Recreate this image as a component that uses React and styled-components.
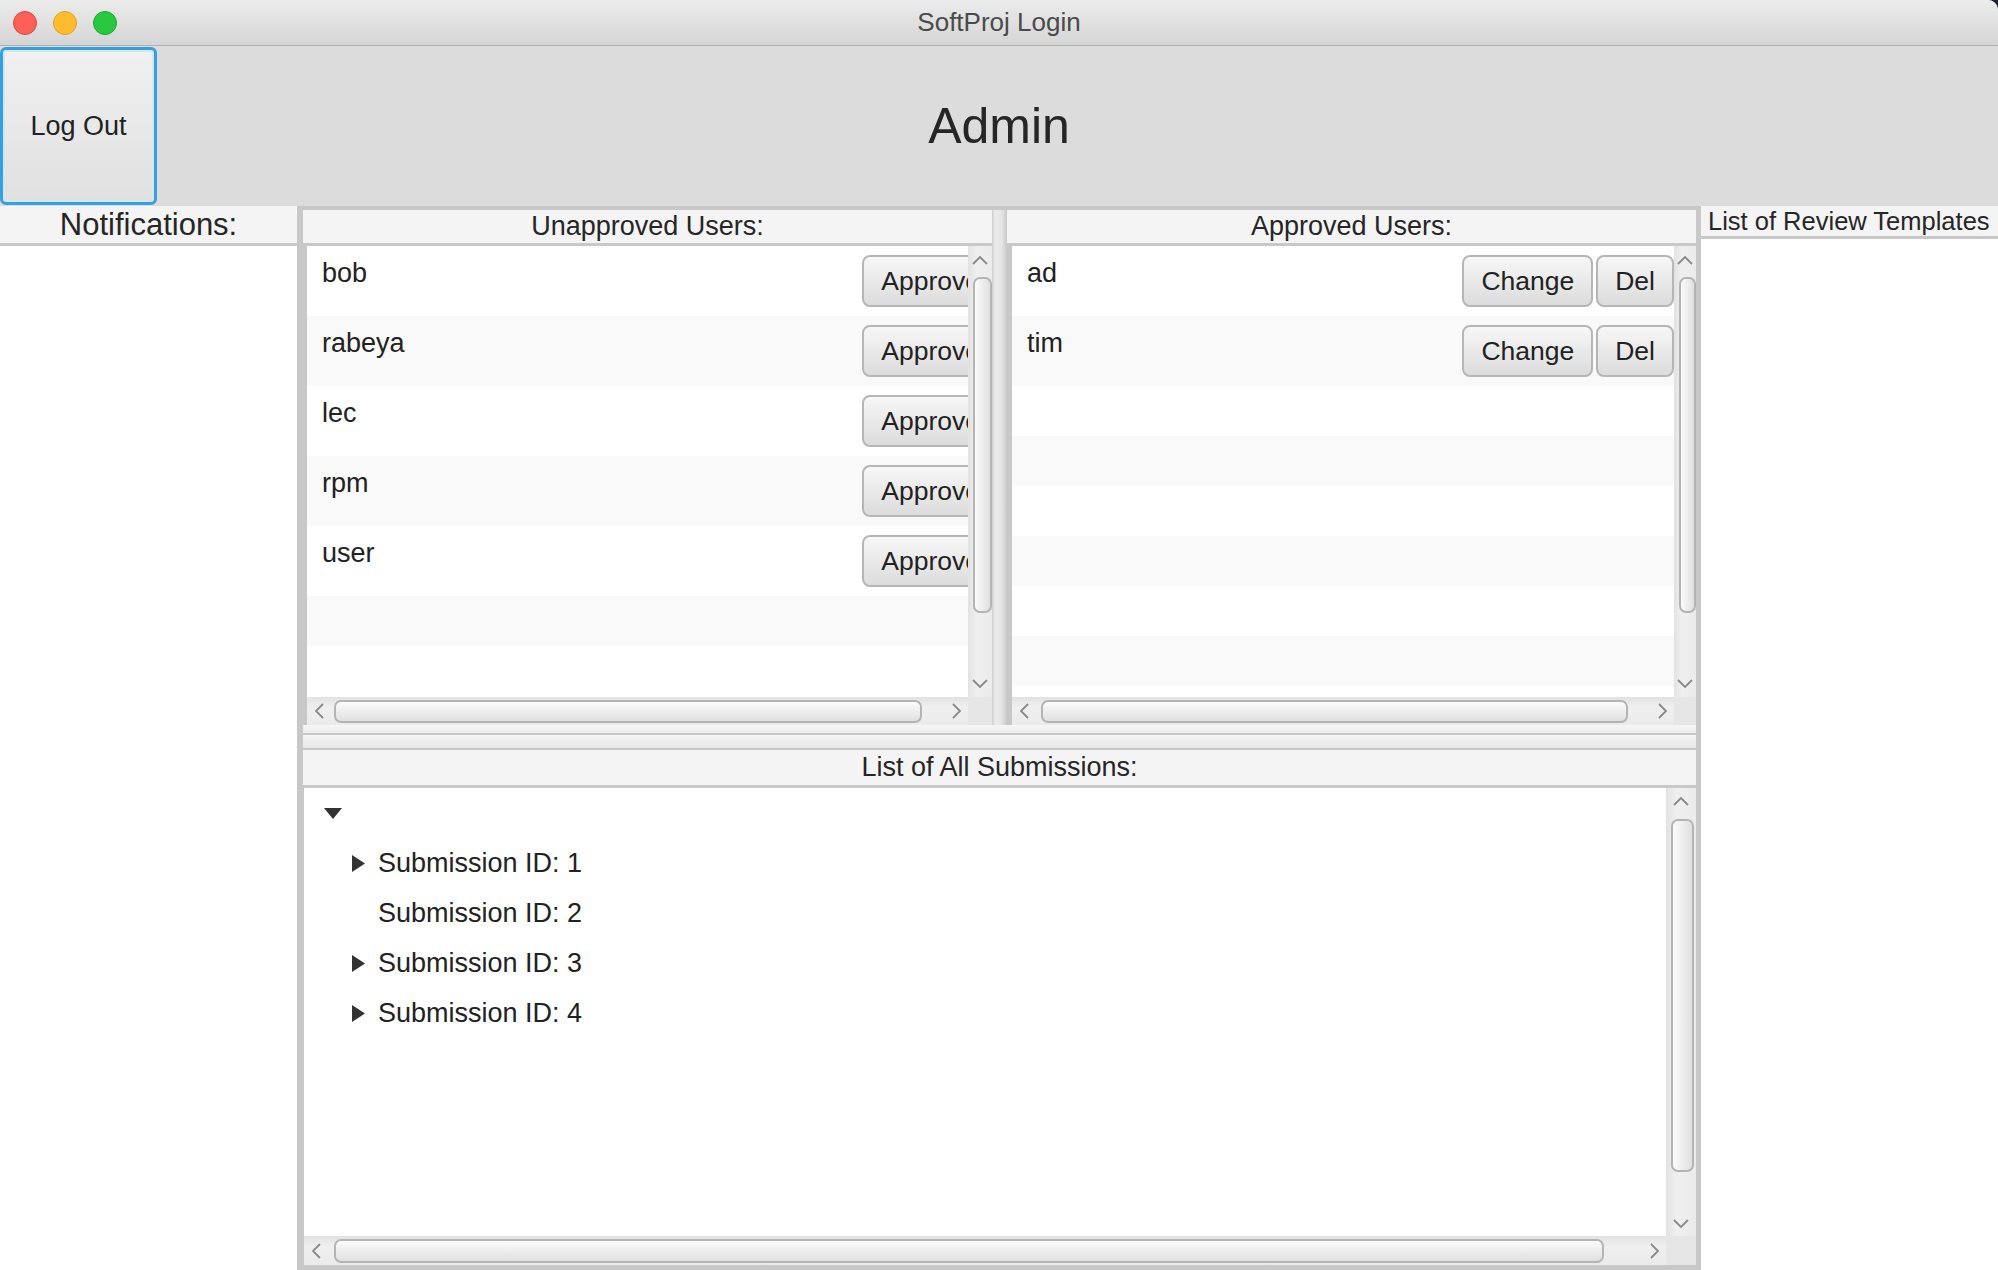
import React from "react";
import styled, { createGlobalStyle } from "styled-components";

const GlobalStyle = createGlobalStyle`
  html, body {
    margin: 0;
    padding: 0;
    background: #1c2330;
  }
  body {
    font-family: "Liberation Sans", Arial, sans-serif;
    color: #2a2a2a;
  }
  * {
    box-sizing: border-box;
  }
`;

const Window = styled.div`
  width: 1998px;
  height: 1270px;
  display: flex;
  flex-direction: column;
  overflow: hidden;
  background: #dcdcdc;
  border-top-right-radius: 10px;
`;

const TitleBar = styled.div`
  height: 46px;
  flex: none;
  display: grid;
  grid-template-columns: 200px 1fr 200px;
  align-items: center;
  background: linear-gradient(#ececec, #d5d5d5);
  border-bottom: 1px solid #b1b1b1;
`;

const Lights = styled.div`
  display: flex;
  gap: 16px;
  padding-left: 13px;
`;

const Light = styled.span`
  width: 24px;
  height: 24px;
  border-radius: 50%;
  background: ${(p) => p.$color};
  border: 1px solid ${(p) => p.$edge};
`;

const WindowTitle = styled.div`
  text-align: center;
  font-size: 26px;
  color: #4a4a4a;
`;

const Header = styled.div`
  height: 160px;
  flex: none;
  display: grid;
  grid-template-columns: 157px 1fr 157px;
  align-items: center;
`;

const LogOutButton = styled.button`
  width: 157px;
  height: 158px;
  padding: 0;
  border: 3px solid #35a0dd;
  border-radius: 6px;
  background: linear-gradient(#f1f1f1, #e0e0e0);
  box-shadow: inset 0 0 0 2px #d3e8f5;
  font-family: "Liberation Sans", Arial, sans-serif;
  font-size: 27px;
  color: #222;
`;

const AdminTitle = styled.h1`
  margin: 0;
  text-align: center;
  font-size: 50px;
  font-weight: normal;
  color: #262626;
`;

const Body = styled.div`
  flex: 1;
  min-height: 0;
  display: flex;
`;

const SideColumn = styled.div`
  width: 297px;
  flex: none;
  display: flex;
  flex-direction: column;
  background: #fff;
`;

const SideHeader = styled.div`
  height: ${(p) => (p.$left ? 33 : 40)}px;
  flex: none;
  display: flex;
  align-items: center;
  justify-content: ${(p) => (p.$left ? "flex-start" : "center")};
  padding-left: ${(p) => (p.$left ? 7 : 0)}px;
  background: #f4f4f4;
  border-bottom: 3px solid #c8c8c8;
  font-size: ${(p) => (p.$left ? 25.5 : 31)}px;
  white-space: nowrap;
  overflow: hidden;
  color: #262626;
`;

const Center = styled.div`
  width: 1404px;
  flex: none;
  display: flex;
  flex-direction: column;
  background: #fff;
  border: solid #c8c8c8;
  border-width: 4px 5px 5px 6px;
`;

const TopSplit = styled.div`
  height: 515px;
  flex: none;
  display: flex;
`;

const Pane = styled.div`
  flex: 1;
  min-width: 0;
  display: flex;
  flex-direction: column;
`;

const PaneHeader = styled.div`
  height: ${(p) => p.$h || 36}px;
  flex: none;
  display: flex;
  align-items: center;
  justify-content: center;
  background: #f4f4f4;
  border-bottom: 3px solid #c8c8c8;
  font-size: 27px;
  color: #262626;
`;

const Splitter = styled.div`
  width: 15px;
  flex: none;
  background: linear-gradient(
    to right,
    #cdcdcd 0,
    #ececec 3px,
    #e6e6e6 9px,
    #d9d9d9 12px,
    #c8c8c8 15px
  );
`;

const ScrollArea = styled.div`
  flex: 1;
  min-height: 0;
  display: grid;
  grid-template-columns: 1fr ${(p) => p.$bar}px;
  grid-template-rows: 1fr ${(p) => p.$hbar}px;
  border-left: ${(p) => p.$edge}px solid #c8c8c8;
`;

const Viewport = styled.div`
  overflow: hidden;
  background: #fff;
  min-width: 0;
  min-height: 0;
`;

const ListRow = styled.div`
  width: ${(p) => p.$w || "100%"};
  height: ${(p) => (p.$empty ? 50 : 70)}px;
  display: flex;
  align-items: center;
  padding: 0 0 0 15px;
  background: ${(p) => (p.$odd ? "#f9f9f9" : "#fff")};
`;

const RowLabel = styled.span`
  align-self: flex-start;
  padding-top: 12px;
  font-size: 27px;
  color: #222;
`;

const ButtonGroup = styled.div`
  margin-left: auto;
  display: flex;
  gap: 3px;
`;

const RowButton = styled.button`
  height: 52px;
  padding: 0 17px;
  border: 2px solid #b6b6b6;
  border-radius: 8px;
  background: linear-gradient(#f7f7f7, #dcdcdc);
  font-family: "Liberation Sans", Arial, sans-serif;
  font-size: 26.5px;
  color: #222;
  white-space: nowrap;
`;

const VBar = styled.div`
  display: flex;
  flex-direction: column;
  background: linear-gradient(to right, #e2e2e2, #efefef 35%, #ebebeb);
`;

const HBar = styled.div`
  display: flex;
  background: linear-gradient(#e2e2e2, #efefef 35%, #ebebeb);
`;

const ArrowBox = styled.div`
  flex: none;
  width: ${(p) => (p.$horizontal ? "24px" : "auto")};
  height: ${(p) => (p.$horizontal ? "auto" : `${p.$h || 28}px`)};
  display: flex;
  align-items: center;
  justify-content: center;
`;

const Track = styled.div`
  flex: 1;
  min-width: 0;
  min-height: 0;
  display: flex;
  flex-direction: ${(p) => (p.$horizontal ? "row" : "column")};
`;

const Thumb = styled.div`
  flex: none;
  border: 2px solid #b4b4b4;
  border-radius: 7px;
  background: ${(p) =>
    p.$horizontal
      ? "linear-gradient(#fbfbfb, #e0e0e0)"
      : "linear-gradient(to right, #fbfbfb, #e0e0e0)"};
  ${(p) =>
    p.$horizontal
      ? `width: ${p.$size}px; margin: 3px 0 2px ${p.$offset}px;`
      : `height: ${p.$size}px; margin: ${p.$offset}px ${p.$right}px 0 5px;`}
`;

const Corner = styled.div`
  background: #e6e6e6;
`;

const Divider = styled.div`
  height: 25px;
  flex: none;
  background: linear-gradient(
    #f6f6f6 0,
    #ededed 8px,
    #c8c8c8 8px,
    #c8c8c8 10px,
    #f5f5f5 10px,
    #e8e8e8 23px,
    #c8c8c8 23px
  );
`;

const Submissions = styled.div`
  flex: 1;
  min-height: 0;
  display: flex;
  flex-direction: column;
`;

const TreeRow = styled.div`
  height: 50px;
  display: flex;
  align-items: center;
  gap: 13px;
  padding-left: ${(p) => p.$indent}px;
  font-size: 27px;
  color: #222;
`;

const Disclosure = styled.span`
  width: ${(p) => p.$w}px;
  flex: none;
  display: flex;
  align-items: center;
`;

function Chevron({ dir }) {
  const pts = {
    up: "1,9 8,2 15,9",
    down: "1,2 8,9 15,2",
    left: "9,1 2,8 9,15",
    right: "2,1 9,8 2,15",
  }[dir];
  const vertical = dir === "up" || dir === "down";
  return (
    <svg
      width={vertical ? 16 : 11}
      height={vertical ? 11 : 16}
      viewBox={vertical ? "0 0 16 11" : "0 0 11 16"}
    >
      <polyline points={pts} fill="none" stroke="#8a8a8a" strokeWidth="1.8" />
    </svg>
  );
}

function VScroll({ offset, size, right = 0, arrow = 28 }) {
  return (
    <VBar>
      <ArrowBox $h={arrow}>
        <Chevron dir="up" />
      </ArrowBox>
      <Track>
        <Thumb $offset={offset} $size={size} $right={right} />
      </Track>
      <ArrowBox $h={arrow}>
        <Chevron dir="down" />
      </ArrowBox>
    </VBar>
  );
}

function HScroll({ offset, size }) {
  return (
    <HBar>
      <ArrowBox $horizontal>
        <Chevron dir="left" />
      </ArrowBox>
      <Track $horizontal>
        <Thumb $horizontal $offset={offset} $size={size} />
      </Track>
      <ArrowBox $horizontal>
        <Chevron dir="right" />
      </ArrowBox>
    </HBar>
  );
}

const unapproved = ["bob", "rabeya", "lec", "rpm", "user"];
const approved = ["ad", "tim"];
const submissions = [
  { id: 1, open: true },
  { id: 2, open: false },
  { id: 3, open: true },
  { id: 4, open: true },
];

export default function App() {
  return (
    <>
      <GlobalStyle />
      <Window>
        <TitleBar>
          <Lights>
            <Light $color="#fc5f57" $edge="#e0443e" />
            <Light $color="#fdbc2e" $edge="#dea123" />
            <Light $color="#28c840" $edge="#1aab29" />
          </Lights>
          <WindowTitle>SoftProj Login</WindowTitle>
          <div />
        </TitleBar>

        <Header>
          <LogOutButton>Log Out</LogOutButton>
          <AdminTitle>Admin</AdminTitle>
          <div />
        </Header>

        <Body>
          <SideColumn>
            <SideHeader>Notifications:</SideHeader>
          </SideColumn>

          <Center>
            <TopSplit>
              <Pane>
                <PaneHeader>Unapproved Users:</PaneHeader>
                <ScrollArea $bar={24} $hbar={28} $edge={4}>
                  <Viewport>
                    {unapproved.map((name, i) => (
                      <ListRow key={name} $odd={i % 2 === 1} $w="692px">
                        <RowLabel>{name}</RowLabel>
                        <ButtonGroup>
                          <RowButton>Approve</RowButton>
                        </ButtonGroup>
                      </ListRow>
                    ))}
                    <ListRow $empty $odd $w="692px" />
                    <ListRow $empty $w="692px" />
                  </Viewport>
                  <VScroll offset={3} size={336} />
                  <HScroll offset={3} size={588} />
                  <Corner />
                </ScrollArea>
              </Pane>

              <Splitter />

              <Pane>
                <PaneHeader>Approved Users:</PaneHeader>
                <ScrollArea $bar={22} $hbar={28} $edge={5}>
                  <Viewport>
                    {approved.map((name, i) => (
                      <ListRow key={name} $odd={i % 2 === 1}>
                        <RowLabel>{name}</RowLabel>
                        <ButtonGroup>
                          <RowButton>Change</RowButton>
                          <RowButton>Del</RowButton>
                        </ButtonGroup>
                      </ListRow>
                    ))}
                    {[2, 3, 4, 5, 6, 7].map((i) => (
                      <ListRow key={i} $empty $odd={i % 2 === 1} />
                    ))}
                  </Viewport>
                  <VScroll offset={3} size={336} />
                  <HScroll offset={5} size={587} />
                  <Corner />
                </ScrollArea>
              </Pane>
            </TopSplit>

            <Divider />

            <Submissions>
              <PaneHeader $h={38}>List of All Submissions:</PaneHeader>
              <ScrollArea $bar={30} $hbar={29} $edge={1}>
                <Viewport>
                  <TreeRow $indent={20}>
                    <Disclosure $w={18}>
                      <svg width="18" height="11" viewBox="0 0 18 11">
                        <polygon points="0,0 18,0 9,11" fill="#333" />
                      </svg>
                    </Disclosure>
                  </TreeRow>
                  {submissions.map((s) => (
                    <TreeRow key={s.id} $indent={48}>
                      <Disclosure $w={13}>
                        {s.open && (
                          <svg width="13" height="17" viewBox="0 0 13 17">
                            <polygon points="0,0 13,8.5 0,17" fill="#333" />
                          </svg>
                        )}
                      </Disclosure>
                      Submission ID: {s.id}
                    </TreeRow>
                  ))}
                </Viewport>
                <VScroll offset={5} size={353} right={2} arrow={26} />
                <HScroll offset={6} size={1270} />
                <Corner />
              </ScrollArea>
            </Submissions>
          </Center>

          <SideColumn>
            <SideHeader $left>List of Review Templates</SideHeader>
          </SideColumn>
        </Body>
      </Window>
    </>
  );
}
